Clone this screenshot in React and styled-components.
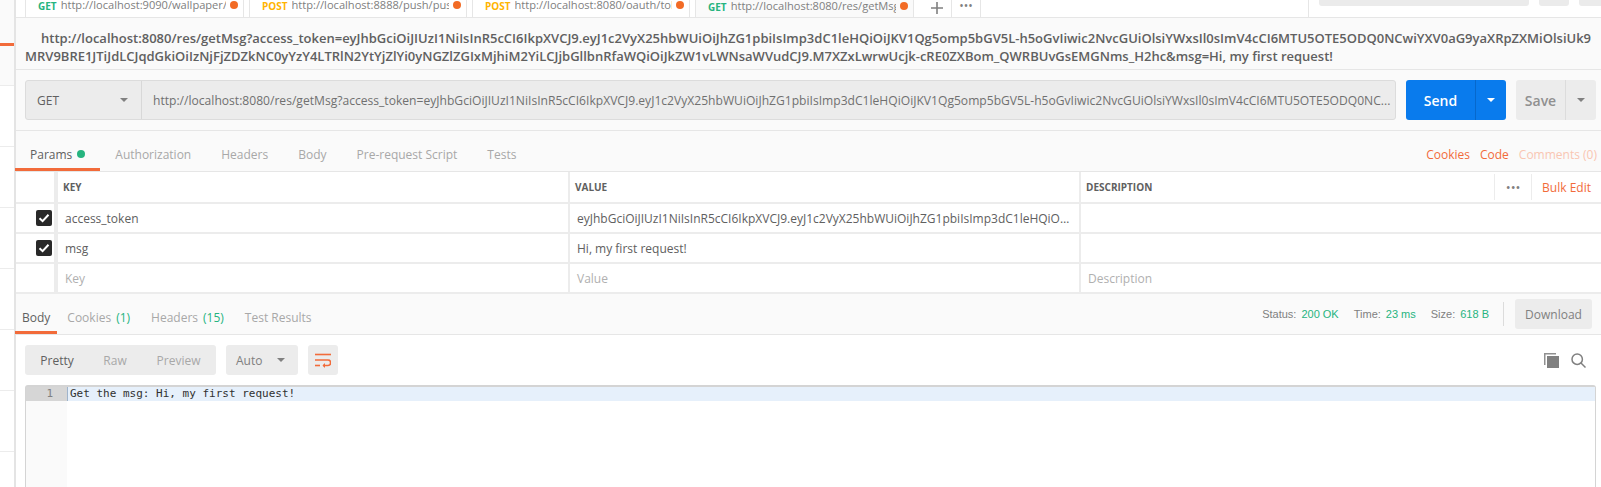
import React from 'react';
import styled, { createGlobalStyle } from 'styled-components';

const token = 'eyJhbGciOiJIUzI1NiIsInR5cCI6IkpXVCJ9.eyJ1c2VyX25hbWUiOiJhZG1pbiIsImp3dC1leHQiOiJKV1Qg5omp5bGV5L-h5oGvIiwic2NvcGUiOlsiYWxsIl0sImV4cCI6MTU5OTE5ODQ0NCwiYXV0aG9yaXRpZXMiOlsiUk9MRV9BRE1JTiJdLCJqdGkiOiIzNjFjZDZkNC0yYzY4LTRlN2YtYjZlYi0yNGZlZGIxMjhiM2YiLCJjbGllbnRfaWQiOiJkZW1vLWNsaWVudCJ9.M7XZxLwrwUcjk-cRE0ZXBom_QWRBUvGsEMGNms_H2hc';
const fullUrl = `http://localhost:8080/res/getMsg?access_token=${token}&msg=Hi, my first request!`;
const shortUrl = fullUrl.slice(0, fullUrl.indexOf('wiYXV0')) + '...';

const tabs = [
  { method: 'GET', url: 'http://localhost:9090/wallpaper/:id', width: 219 },
  { method: 'POST', url: 'http://localhost:8888/push/push/all', width: 218 },
  { method: 'POST', url: 'http://localhost:8080/oauth/token', width: 218 },
  { method: 'GET', url: 'http://localhost:8080/res/getMsg', width: 219, active: true },
];

const GlobalStyle = createGlobalStyle`
  html, body { margin: 0; padding: 0; background: #fff; }
  * { box-sizing: border-box; }
`;

const Page = styled.div`
  display: flex;
  width: 1601px;
  height: 487px;
  overflow: hidden;
  font-family: "Open Sans", sans-serif;
  font-size: 12px;
  color: #505050;
  background: #fff;
`;

const Sidebar = styled.div`
  flex: 0 0 16px;
  border-right: 2px solid #e4e4e4;
  background: linear-gradient(#fafafa 86px, #fff 86px);
`;

const SideMarker = styled.div`
  width: 14px;
  height: 3px;
  margin-top: 43px;
  background: #f26b3a;
`;

const SideRow = styled.div`
  height: ${p => p.$height}px;
  border-bottom: 1px solid #ececec;
`;

const Main = styled.div`
  flex: 1;
  min-width: 0;
  display: flex;
  flex-direction: column;
`;

const TabStrip = styled.div`
  flex: 0 0 18px;
  display: flex;
  align-items: stretch;
  overflow: hidden;
  padding-left: 9px;
  background: #fff;
  border-bottom: 1px solid #e6e6e6;
`;

const Tab = styled.div`
  flex: 0 0 ${p => p.$width}px;
  min-width: 0;
  display: flex;
  align-items: flex-end;
  gap: 4px;
  margin-right: ${p => p.$active ? 0 : 5}px;
  padding: 0 5px 4px 12px;
  border-left: 1px solid #e6e6e6;
  border-right: 1px solid #e6e6e6;
  background: ${p => p.$active ? '#fafafa' : '#fff'};
  height: ${p => p.$active ? 18 : 17}px;
`;

const TabMethod = styled.span`
  font-size: 10px;
  font-weight: 700;
  line-height: 14px;
  color: ${p => p.$method === 'GET' ? '#26b47f' : '#ffb400'};
`;

const TabUrl = styled.span`
  flex: 1;
  min-width: 0;
  overflow: hidden;
  white-space: nowrap;
  font-size: 11.1px;
  line-height: 16px;
  color: #808080;
`;

const TabDot = styled.span`
  flex: 0 0 8px;
  height: 8px;
  margin-bottom: 4px;
  border-radius: 50%;
  background: #f26b25;
`;

const StripButton = styled.div`
  flex: 0 0 ${p => p.$width}px;
  display: flex;
  align-items: flex-end;
  justify-content: center;
  padding: 0 0 3px ${p => p.$shift || 0}px;
  border-right: 1px solid #e6e6e6;
  color: #808080;
`;

const StripSpacer = styled.div`
  flex: 0 0 328px;
  border-right: 1px solid #e6e6e6;
`;

const StripTools = styled.div`
  display: flex;
  gap: 10px;
  padding-left: 10px;
`;

const StripTool = styled.div`
  flex: 0 0 ${p => p.$width}px;
  height: 6px;
  border-radius: 0 0 3px 3px;
  background: #ebebeb;
`;

const Title = styled.div`
  flex: 0 0 52px;
  padding: 11px 0 0 9px;
  background: #fafafa;
  border-bottom: 1px solid #e6e6e6;
`;

const TitleLine = styled.div`
  padding-left: ${p => p.$indent || 0}px;
  font-size: 13px;
  font-weight: 600;
  line-height: 18px;
  white-space: nowrap;
  color: #606060;
`;

const UrlRow = styled.div`
  flex: 0 0 61px;
  display: flex;
  padding: 10px 5px 0 9px;
  background: #fafafa;
  border-bottom: 1px solid #e6e6e6;
`;

const UrlBox = styled.div`
  flex: 0 0 1371px;
  min-width: 0;
  height: 40px;
  display: flex;
  align-items: center;
  background: #ececec;
  border: 1px solid #dcdcdc;
  border-radius: 3px;
`;

const MethodSelect = styled.div`
  flex: 0 0 116px;
  height: 100%;
  display: flex;
  align-items: center;
  justify-content: space-between;
  padding: 0 13px 0 11px;
  border-right: 1px solid #d8d8d8;
  font-size: 12px;
  color: #606060;
`;

const Caret = styled.span`
  width: 0;
  height: 0;
  border-left: 4px solid transparent;
  border-right: 4px solid transparent;
  border-top: 4px solid ${p => p.$color || '#808080'};
`;

const UrlText = styled.div`
  flex: 1;
  min-width: 0;
  padding: 0 9px 0 11px;
  overflow: hidden;
  white-space: nowrap;
  font-size: 12.1px;
  color: #707070;
`;

const SplitButton = styled.div`
  flex: 0 0 ${p => p.$width}px;
  height: 40px;
  display: flex;
  margin-left: 10px;
  border-radius: 3px;
  font-size: 14px;
  font-weight: 600;
  color: ${p => p.$primary ? '#fff' : '#909090'};
  background: ${p => p.$primary ? '#097bed' : '#ececec'};
`;

const SplitLabel = styled.div`
  flex: 1;
  display: flex;
  align-items: center;
  justify-content: center;
`;

const SplitArrow = styled.div`
  flex: 0 0 31px;
  display: flex;
  align-items: center;
  justify-content: center;
  border-left: 1px solid ${p => p.$primary ? '#0668cc' : '#dcdcdc'};
`;

const TabBar = styled.div`
  flex: 0 0 41px;
  display: flex;
  align-items: stretch;
  justify-content: space-between;
  padding-right: ${p => p.$right || 0}px;
  background: #fafafa;
  border-bottom: 1px solid #e6e6e6;
`;

const SubTabs = styled.div`
  display: flex;
`;

const SubTab = styled.div`
  display: flex;
  align-items: center;
  gap: 5px;
  height: 100%;
  padding: 9px ${p => p.$pad ?? 15}px 0;
  margin-left: ${p => p.$first ? '-1px' : 0};
  border-bottom: 3px solid ${p => p.$active ? '#f26b3a' : 'transparent'};
  font-size: 12px;
  white-space: nowrap;
  color: ${p => p.$active ? '#606060' : '#a8a8a8'};
`;

const Green = styled.span`
  color: #26b47f;
`;

const Dot = styled.span`
  width: 8px;
  height: 8px;
  border-radius: 50%;
  background: #26b47f;
`;

const LinkRow = styled.div`
  display: flex;
  align-items: center;
  gap: 10px;
  padding-top: 6px;
  font-size: 12px;
  color: #f26b3a;
`;

const FadedLink = styled.span`
  color: #f9c6b2;
`;

const TableRow = styled.div`
  flex: 0 0 ${p => p.$header ? 32 : 30}px;
  display: grid;
  grid-template-columns: 40px 510px 509px 1fr;
  column-gap: 2px;
  background: #ececec;
  border-bottom: 2px solid #ececec;
`;

const CheckCell = styled.div`
  display: flex;
  align-items: center;
  justify-content: flex-end;
  padding-right: 2px;
  margin-right: 2px;
  background: #fff;
`;

const Cell = styled.div`
  display: flex;
  align-items: center;
  min-width: 0;
  padding: 0 8px 0 7px;
  background: #fff;
  font-size: 12px;
  color: ${p => p.$placeholder ? '#b0b0b0' : '#606060'};
`;

const CellText = styled.span`
  overflow: hidden;
  white-space: nowrap;
  text-overflow: ellipsis;
`;

const HeadCell = styled(Cell)`
  padding-left: 5px;
  font-size: 10px;
  font-weight: 700;
  color: #606060;
`;

const DescHead = styled(HeadCell)`
  justify-content: space-between;
  padding-right: 10px;
`;

const HeadTools = styled.div`
  display: flex;
  align-items: center;
  height: 26px;
  font-weight: 400;
`;

const MoreDots = styled.span`
  width: 38px;
  height: 100%;
  display: flex;
  align-items: center;
  justify-content: center;
  border-left: 1px solid #ececec;
  border-right: 1px solid #ececec;
  font-size: 13px;
  color: #808080;
`;

const BulkEdit = styled.span`
  padding-left: 10px;
  font-size: 12px;
  color: #f26b3a;
`;

const Status = styled.div`
  display: flex;
  align-items: center;
  font-family: "Liberation Sans", Arial, sans-serif;
  font-size: 11px;
  color: #808080;
`;

const StatusItem = styled.span`
  margin-right: 15px;
`;

const StatusValue = styled(Green)`
  margin-left: 5px;
`;

const StatusDivider = styled.span`
  height: 24px;
  margin: 0 11px 0 14px;
  border-left: 1px solid #dcdcdc;
`;

const DownloadButton = styled.div`
  width: 77px;
  height: 30px;
  display: flex;
  align-items: center;
  justify-content: center;
  border-radius: 3px;
  background: #ececec;
  font-family: "Open Sans", sans-serif;
  font-size: 12px;
  color: #808080;
`;

const ResponseBody = styled.div`
  flex: 1;
  min-height: 0;
  padding: 10px 5px 0 9px;
  background: #fff;
`;

const Toolbar = styled.div`
  display: flex;
  align-items: center;
  gap: 10px;
  height: 30px;
`;

const Segment = styled.div`
  display: flex;
  align-items: center;
  height: 30px;
  border-radius: 3px;
  background: #ececec;
  font-size: 12px;
`;

const ViewOption = styled.span`
  width: ${p => p.$width}px;
  text-align: center;
  color: ${p => p.$active ? '#606060' : '#a8a8a8'};
`;

const AutoSelect = styled(Segment)`
  width: 72px;
  justify-content: space-between;
  padding: 0 13px 0 10px;
  color: #808080;
`;

const WrapButton = styled(Segment)`
  width: 30px;
  justify-content: center;
`;

const ToolIcons = styled.div`
  margin-left: auto;
  display: flex;
  align-items: center;
  gap: 12px;
  padding-right: 10px;
`;

const Editor = styled.div`
  margin-top: 10px;
  height: 102px;
  display: grid;
  grid-template-columns: 41px 1fr;
  grid-template-rows: 14px 1fr;
  border: 1px solid #d4d4d4;
  border-top-width: 2px;
  border-bottom: none;
  border-radius: 3px 3px 0 0;
  font-family: "DejaVu Sans Mono", monospace;
  font-size: 11px;
  line-height: 14px;
`;

const LineNumber = styled.div`
  padding-right: 14px;
  text-align: right;
  background: #d6d6d6;
  color: #808080;
`;

const LineText = styled.div`
  padding-left: 2px;
  background: #e6f0fb;
  color: #303030;
  border-left: 1px solid #9fb4cc;
`;

const Gutter = styled.div`
  background: #fafafa;
`;

const Check = () => (
  <svg width="16" height="16" viewBox="0 0 16 16">
    <rect width="16" height="16" rx="2" fill="#282828" />
    <path d="M3.5 8.3 L6.6 11.2 L12.5 4.8" fill="none" stroke="#fff" strokeWidth="2" />
  </svg>
);

const WrapIcon = () => (
  <svg width="16" height="15" viewBox="0 0 16 15" fill="none" stroke="#f26b3a" strokeWidth="1.6">
    <path d="M0 1.5 H16" />
    <path d="M0 7 H13 C16.5 7 16.5 12.5 13 12.5 H8" />
    <path d="M0 12.5 H5" />
    <path d="M10 10 L7.5 12.5 L10 15" fill="#f26b3a" stroke="none" />
  </svg>
);

const CopyIcon = () => (
  <svg width="15" height="15" viewBox="0 0 15 15">
    <path d="M0 0 H12 V1.5 H1.5 V12 H0 Z" fill="#909090" />
    <rect x="3" y="3" width="12" height="12" fill="#808080" />
  </svg>
);

const SearchIcon = () => (
  <svg width="15" height="15" viewBox="0 0 15 15" fill="none" stroke="#808080" strokeWidth="1.5">
    <circle cx="6.2" cy="6.2" r="5.2" />
    <path d="M10 10 L14.5 14.5" />
  </svg>
);

const PlusIcon = () => (
  <svg width="12" height="12" viewBox="0 0 12 12" stroke="#808080" strokeWidth="1.6">
    <path d="M6 0 V12 M0 6 H12" />
  </svg>
);

const App = () => {
  return (
    <Page>
      <GlobalStyle />
      <Sidebar>
        <SideMarker />
        <SideRow $height={40} />
        {[0, 1, 2, 3, 4, 5].map(i => <SideRow key={i} $height={61} />)}
      </Sidebar>
      <Main>
        <TabStrip>
          {tabs.map(t => (
            <Tab key={t.url} $width={t.width} $active={t.active}>
              <TabMethod $method={t.method}>{t.method}</TabMethod>
              <TabUrl>{t.url}</TabUrl>
              <TabDot />
            </Tab>
          ))}
          <StripButton $width={38} $shift={8}><PlusIcon /></StripButton>
          <StripButton $width={29}>•••</StripButton>
          <StripSpacer />
          <StripTools>
            <StripTool $width={210} />
            <StripTool $width={30} />
            <StripTool $width={30} />
          </StripTools>
        </TabStrip>

        <Title>
          <TitleLine $indent={16}>{fullUrl.slice(0, 218)}</TitleLine>
          <TitleLine>{fullUrl.slice(218)}</TitleLine>
        </Title>

        <UrlRow>
          <UrlBox>
            <MethodSelect>GET<Caret /></MethodSelect>
            <UrlText>{shortUrl}</UrlText>
          </UrlBox>
          <SplitButton $width={100} $primary>
            <SplitLabel>Send</SplitLabel>
            <SplitArrow $primary><Caret $color="#fff" /></SplitArrow>
          </SplitButton>
          <SplitButton $width={80}>
            <SplitLabel>Save</SplitLabel>
            <SplitArrow><Caret /></SplitArrow>
          </SplitButton>
        </UrlRow>

        <TabBar $right={4}>
          <SubTabs>
            <SubTab $active $first>Params <Dot /></SubTab>
            <SubTab>Authorization</SubTab>
            <SubTab>Headers</SubTab>
            <SubTab>Body</SubTab>
            <SubTab>Pre-request Script</SubTab>
            <SubTab>Tests</SubTab>
          </SubTabs>
          <LinkRow>
            <span>Cookies</span>
            <span>Code</span>
            <FadedLink>Comments (0)</FadedLink>
          </LinkRow>
        </TabBar>

        <TableRow $header>
          <CheckCell />
          <HeadCell>KEY</HeadCell>
          <HeadCell>VALUE</HeadCell>
          <DescHead>
            DESCRIPTION
            <HeadTools>
              <MoreDots>•••</MoreDots>
              <BulkEdit>Bulk Edit</BulkEdit>
            </HeadTools>
          </DescHead>
        </TableRow>
        <TableRow>
          <CheckCell><Check /></CheckCell>
          <Cell>access_token</Cell>
          <Cell><CellText>{token}</CellText></Cell>
          <Cell />
        </TableRow>
        <TableRow>
          <CheckCell><Check /></CheckCell>
          <Cell>msg</Cell>
          <Cell>Hi, my first request!</Cell>
          <Cell />
        </TableRow>
        <TableRow>
          <CheckCell />
          <Cell $placeholder>Key</Cell>
          <Cell $placeholder>Value</Cell>
          <Cell $placeholder>Description</Cell>
        </TableRow>

        <TabBar $right={9}>
          <SubTabs>
            <SubTab $active $pad={7} $first>Body</SubTab>
            <SubTab $pad={10}>Cookies <Green>(1)</Green></SubTab>
            <SubTab $pad={11}>Headers <Green>(15)</Green></SubTab>
            <SubTab $pad={10}>Test Results</SubTab>
          </SubTabs>
          <Status>
            <StatusItem>Status:<StatusValue>200 OK</StatusValue></StatusItem>
            <StatusItem>Time:<StatusValue>23 ms</StatusValue></StatusItem>
            <span>Size:<StatusValue>618 B</StatusValue></span>
            <StatusDivider />
            <DownloadButton>Download</DownloadButton>
          </Status>
        </TabBar>

        <ResponseBody>
          <Toolbar>
            <Segment>
              <ViewOption $width={64} $active>Pretty</ViewOption>
              <ViewOption $width={52}>Raw</ViewOption>
              <ViewOption $width={75}>Preview</ViewOption>
            </Segment>
            <AutoSelect>Auto<Caret /></AutoSelect>
            <WrapButton><WrapIcon /></WrapButton>
            <ToolIcons>
              <CopyIcon />
              <SearchIcon />
            </ToolIcons>
          </Toolbar>
          <Editor>
            <LineNumber>1</LineNumber>
            <LineText>Get the msg: Hi, my first request!</LineText>
            <Gutter />
          </Editor>
        </ResponseBody>
      </Main>
    </Page>
  );
};

export default App;
